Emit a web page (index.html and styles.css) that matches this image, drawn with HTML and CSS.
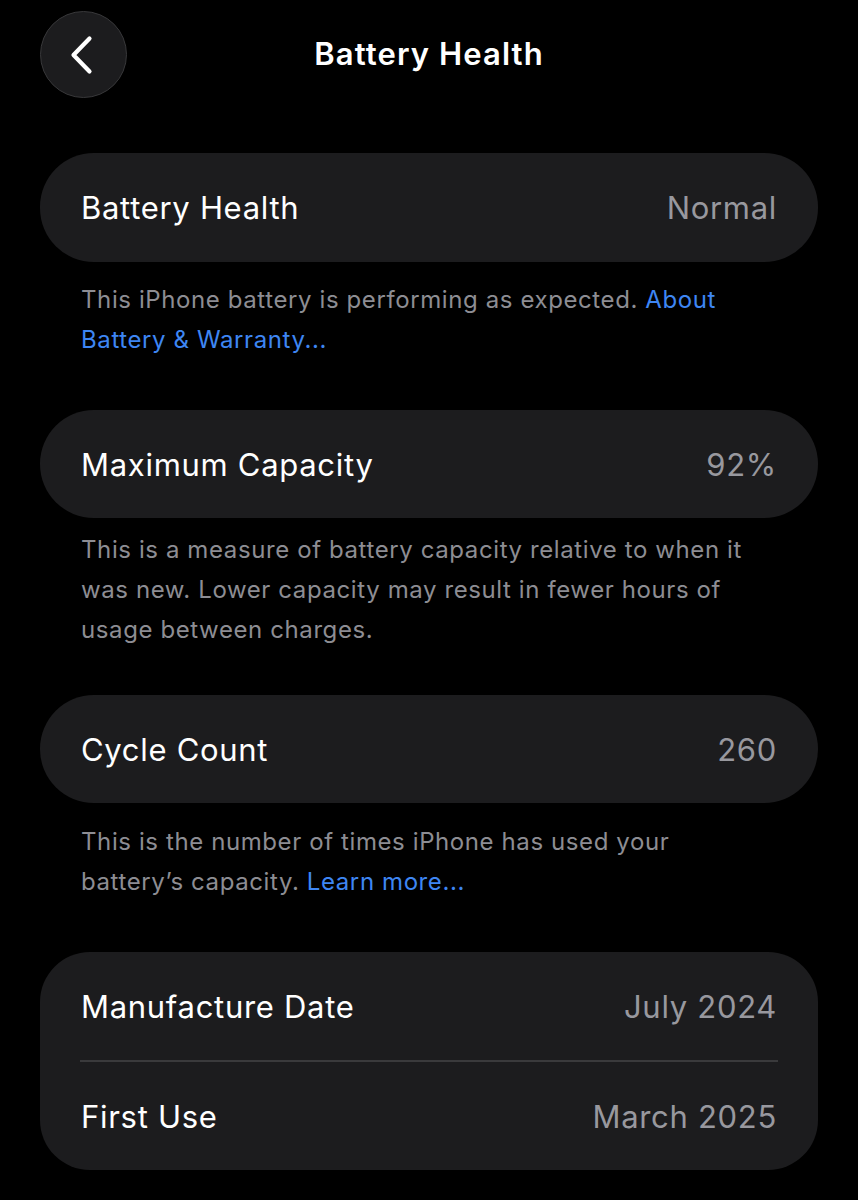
FILE: index.html
```html
<!DOCTYPE html>
<html lang="en">
<head>
<meta charset="utf-8">
<title>Battery Health</title>
<link rel="stylesheet" href="styles.css">
</head>
<body>
<div class="screen">
  <header class="nav">
    <button class="back" aria-label="Back">
      <svg width="30" height="40" viewBox="0 0 30 40" fill="none">
        <path d="M22.5 3.5 L6.5 20 L22.5 36.5" stroke="#ffffff" stroke-width="4.2" stroke-linecap="round" stroke-linejoin="round"/>
      </svg>
    </button>
    <h1 class="title">Battery Health</h1>
  </header>

  <section class="group g1">
    <div class="card pill">
      <div class="row"><span class="label">Battery Health</span><span class="value">Normal</span></div>
    </div>
    <p class="note n1">This iPhone battery is performing as expected. <a class="link">About<br>Battery &amp; Warranty...</a></p>
  </section>

  <section class="group g2">
    <div class="card pill">
      <div class="row"><span class="label">Maximum Capacity</span><span class="value">92%</span></div>
    </div>
    <p class="note n2">This is a measure of battery capacity relative to when it<br>was new. Lower capacity may result in fewer hours of<br>usage between charges.</p>
  </section>

  <section class="group g3">
    <div class="card pill">
      <div class="row"><span class="label">Cycle Count</span><span class="value">260</span></div>
    </div>
    <p class="note n3">This is the number of times iPhone has used your<br>battery’s capacity. <a class="link">Learn more...</a></p>
  </section>

  <section class="group g4">
    <div class="card multi">
      <div class="row"><span class="label">Manufacture Date</span><span class="value">July 2024</span></div>
      <div class="sep"></div>
      <div class="row"><span class="label">First Use</span><span class="value">March 2025</span></div>
    </div>
  </section>
</div>
</body>
</html>
```

FILE: styles.css
```css
html, body {
  margin: 0;
  padding: 0;
  background: #000000;
}
body {
  font-family: Inter, "Noto Sans", "Liberation Sans", sans-serif;
  color: #ffffff;
  -webkit-font-smoothing: antialiased;
}
.screen {
  width: 858px;
  height: 1200px;
  overflow: hidden;
  padding: 0 40px;
  box-sizing: border-box;
}
.nav {
  position: relative;
  height: 108px;
  display: flex;
  align-items: center;
  justify-content: center;
}
.back {
  position: absolute;
  left: 0;
  top: 11px;
  width: 87px;
  height: 87px;
  border-radius: 50%;
  background: #1c1c1e;
  border: 1.5px solid #38383a;
  box-sizing: border-box;
  display: flex;
  align-items: center;
  justify-content: center;
  padding: 0 4px 0 0;
  cursor: pointer;
}
.title {
  margin: 0;
  font-size: 31px;
  font-weight: 600;
  letter-spacing: 1.1px;
  position: relative;
  top: -1px;
}
.g1 { margin-top: 45px; }
.g2 { margin-top: 50px; }
.g3 { margin-top: 45px; }
.g4 { margin-top: 50px; }
.card {
  background: #1c1c1e;
}
.card.pill {
  height: 108px;
  border-radius: 54px;
  display: flex;
  align-items: center;
}
.g1 .card.pill {
  height: 109px;
}
.card.multi {
  border-radius: 50px;
}
.card.multi .row {
  height: 108px;
}
.row {
  flex: 1;
  display: flex;
  align-items: center;
  justify-content: space-between;
  padding: 0 41px;
  font-size: 31px;
  letter-spacing: 0.7px;
}
.label {
  color: #ffffff;
}
.value {
  color: #98989e;
}
.sep {
  height: 2px;
  background: #3a3a3c;
  margin: 0 40px;
}
.note {
  margin: 0;
  padding: 18px 41px 0;
  font-size: 24px;
  line-height: 40px;
  color: #8d8d93;
  letter-spacing: 0.6px;
}
.n2 { padding-top: 12px; }
.n3 { padding-top: 19px; }
.link {
  color: #3e86f3;
  text-decoration: none;
}
```
